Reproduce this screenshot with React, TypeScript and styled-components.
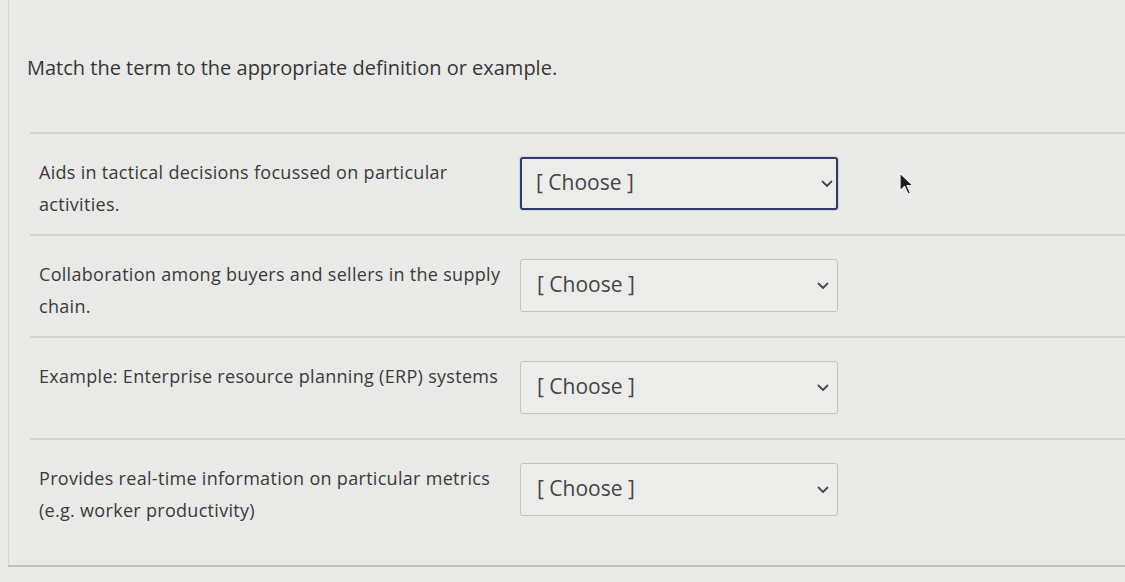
import React from "react";
import styled, { createGlobalStyle } from "styled-components";

const Global = createGlobalStyle`
  html, body {
    margin: 0;
    padding: 0;
    background: #e9e9e7;
  }
  body {
    font-family: "Open Sans", Lato, Arial, sans-serif;
    color: #3a3a3a;
  }
`;

const Page = styled.div`
  position: relative;
  width: 1125px;
  height: 582px;
  overflow: hidden;
  background: #e9e9e7;
`;

const Panel = styled.div`
  margin-left: 8px;
  height: 567px;
  box-sizing: border-box;
  border-left: 1px solid #d3d3d1;
  border-bottom: 2px solid #bfbfbd;
  display: flex;
  flex-direction: column;
`;

const Title = styled.h1`
  margin: 0;
  padding: 54px 0 0 18px;
  height: 132px;
  flex: none;
  box-sizing: border-box;
  font-size: 20px;
  line-height: 28px;
  font-weight: 400;
  color: #363636;
`;

const Row = styled.div<{ $last?: boolean }>`
  margin-left: 21px;
  border-top: 2px solid #d2d2d0;
  display: flex;
  align-items: flex-start;
  padding: 22px 0 0 9px;
  box-sizing: border-box;
  flex: none;
  height: ${(p) => (p.$last ? "128px" : "102px")};
`;

const Label = styled.div`
  width: 481px;
  padding-right: 8px;
  box-sizing: border-box;
  flex: none;
  font-size: 18px;
  letter-spacing: 0.3px;
  line-height: 32px;
  color: #3a3a3a;
`;

const SelectBox = styled.div<{ $focused?: boolean }>`
  margin-top: 1px;
  width: 318px;
  height: 53px;
  box-sizing: border-box;
  border-radius: 3px;
  border: ${(p) => (p.$focused ? "2px solid #2f3a6a" : "1px solid #c2c2c0")};
  box-shadow: ${(p) => (p.$focused ? "0 0 0 1px #d4d4d8" : "none")};
  background: #ececea;
  display: flex;
  align-items: center;
  justify-content: space-between;
  padding: ${(p) => (p.$focused ? "0 3px 0 14px" : "0 8px 0 16px")};
`;

const SelectText = styled.span`
  font-size: 21px;
  color: #444;
  margin-top: -3px;
`;

const Cursor = styled.svg`
  position: absolute;
  left: 898px;
  top: 172px;
`;

const Chevron = () => (
  <svg width="12" height="8" viewBox="0 0 12 8">
    <path d="M1.5 1.5 L6 6 L10.5 1.5" fill="none" stroke="#4a4a4a" strokeWidth="1.8" strokeLinecap="round" strokeLinejoin="round" />
  </svg>
);

const rows = [
  "Aids in tactical decisions focussed on particular activities.",
  "Collaboration among buyers and sellers in the supply chain.",
  "Example: Enterprise resource planning (ERP) systems",
  "Provides real-time information on particular metrics (e.g. worker productivity)",
];

export default function App() {
  return (
    <Page>
      <Global />
      <Panel>
        <Title>Match the term to the appropriate definition or example.</Title>
        {rows.map((t, i) => (
          <Row key={i} $last={i === rows.length - 1}>
            <Label>{t}</Label>
            <SelectBox $focused={i === 0}>
              <SelectText>[ Choose ]</SelectText>
              <Chevron />
            </SelectBox>
          </Row>
        ))}
      </Panel>
      <Cursor width="18" height="26" viewBox="0 0 18 26">
        <path d="M2 1 L2 19 L6.5 14.5 L10 22 L12.5 21 L9 13.5 L15 13.5 Z" fill="#1e1e1e" stroke="#f4f4f4" strokeWidth="1.2" strokeLinejoin="round" />
      </Cursor>
    </Page>
  );
}
